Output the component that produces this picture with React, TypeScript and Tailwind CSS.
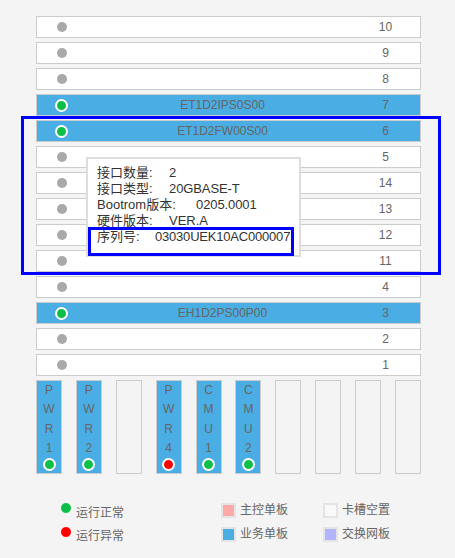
import React from "react";

const FONT = { fontFamily: '"Liberation Sans", Arial, "Noto Sans CJK SC", sans-serif' };

type Row = { num: number; name?: string; active?: boolean };

const rows: Row[] = [
  { num: 10 },
  { num: 9 },
  { num: 8 },
  { num: 7, name: "ET1D2IPS0S00", active: true },
  { num: 6, name: "ET1D2FW00S00", active: true },
  { num: 5 },
  { num: 14 },
  { num: 13 },
  { num: 12 },
  { num: 11 },
  { num: 4 },
  { num: 3, name: "EH1D2PS00P00", active: true },
  { num: 2 },
  { num: 1 },
];

type Slot = { label?: string; status?: "ok" | "bad" };
const slots: Slot[] = [
  { label: "PWR1", status: "ok" },
  { label: "PWR2", status: "ok" },
  {},
  { label: "PWR4", status: "bad" },
  { label: "CMU1", status: "ok" },
  { label: "CMU2", status: "ok" },
  {},
  {},
  {},
  {},
];

function RingDot({ color }: { color: "green" | "red" }) {
  return (
    <div
      className={
        "w-[13px] h-[13px] rounded-full border-2 border-white " +
        (color === "green" ? "bg-[#0cbf48]" : "bg-[#ff0000]")
      }
    />
  );
}

export default function App() {
  return (
    <div className="relative w-[455px] h-[558px] bg-[#f4f4f4] overflow-hidden" style={FONT}>
      <div className="pt-[16px] pl-[36px] w-[421px]">
        <div className="flex flex-col gap-[4px]">
          {rows.map((r) => (
            <div
              key={r.num}
              className={
                "h-[22px] border border-[#cccccc] grid grid-cols-[57px_1fr_69px] items-center text-[12px] text-[#666666] " +
                (r.active ? "bg-[#4aade3]" : "bg-white")
              }
            >
              <div className="flex items-center pl-[18px]">
                <div className="w-[13px] flex justify-center">
                  {r.active ? (
                    <RingDot color="green" />
                  ) : (
                    <div className="w-[10px] h-[10px] rounded-full bg-[#a9a9a9]" />
                  )}
                </div>
              </div>
              <div className="text-center leading-[20px]">{r.name ?? ""}</div>
              <div className="text-center leading-[20px]">{r.num}</div>
            </div>
          ))}
        </div>

        <div className="mt-[4px] h-[94px] flex justify-between">
          {slots.map((s, i) => (
            <div
              key={i}
              className={
                "w-[26px] h-full border border-[#cccccc] flex flex-col items-center pb-[2px] " +
                (s.label ? "bg-[#4aade3]" : "bg-[#f4f4f4]")
              }
            >
              {s.label && (
                <div className="flex flex-col items-center text-[12px] text-[#666666] leading-[19.3px]">
                  {s.label.split("").map((c, j) => (
                    <span key={j}>{c}</span>
                  ))}
                </div>
              )}
              {s.status && (
                <div className="mt-auto">
                  <RingDot color={s.status === "ok" ? "green" : "red"} />
                </div>
              )}
            </div>
          ))}
        </div>
      </div>

      {/* Legend */}
      <div className="mt-[28px] pl-[60px] flex text-[12px] text-[#666666]">
        <div className="w-[161px] flex flex-col gap-[8px]">
          <div className="h-[16px] flex items-start">
            <div className="w-[12px] h-[12px] rounded-full border border-white bg-[#0cbf48]" />
            <span className="ml-[4px] mt-[3px] leading-[16px]">运行正常</span>
          </div>
          <div className="h-[16px] flex items-start">
            <div className="w-[12px] h-[12px] rounded-full border border-white bg-[#ff0000]" />
            <span className="ml-[4px] mt-[2px] leading-[16px]">运行异常</span>
          </div>
        </div>
        <div className="w-[102px] flex flex-col gap-[8px]">
          <div className="h-[16px] flex items-center">
            <div className="w-[15px] h-[15px] border-2 border-[#e4e4e4] bg-[#ffaaaa]" />
            <span className="ml-[4px] leading-[16px]">主控单板</span>
          </div>
          <div className="h-[16px] flex items-center">
            <div className="w-[15px] h-[15px] border-2 border-[#e4e4e4] bg-[#4aade3]" />
            <span className="ml-[4px] leading-[16px]">业务单板</span>
          </div>
        </div>
        <div className="flex flex-col gap-[8px]">
          <div className="h-[16px] flex items-center">
            <div className="w-[15px] h-[15px] border-2 border-[#e4e4e4] bg-[#f9f9f9]" />
            <span className="ml-[4px] leading-[16px]">卡槽空置</span>
          </div>
          <div className="h-[16px] flex items-center">
            <div className="w-[15px] h-[15px] border-2 border-[#e4e4e4] bg-[#b3b3ff]" />
            <span className="ml-[4px] leading-[16px]">交换网板</span>
          </div>
        </div>
      </div>

      {/* Tooltip */}
      <div className="absolute left-[86px] top-[157px] w-[215px] h-[100px] bg-white border-2 border-[#dddddd] pl-[9px] pt-[6px] text-[13px] text-[#333333] leading-[16px]">
        <div className="flex">
          <span className="w-[72px]">接口数量:</span>
          <span>2</span>
        </div>
        <div className="flex">
          <span className="w-[72px]">接口类型:</span>
          <span className="tracking-[-0.1px]">20GBASE-T</span>
        </div>
        <div className="flex">
          <span className="w-[99px]">Bootrom版本:</span>
          <span className="tracking-[-0.1px]">0205.0001</span>
        </div>
        <div className="flex">
          <span className="w-[72px]">硬件版本:</span>
          <span>VER.A</span>
        </div>
        <div className="flex">
          <span className="w-[58px]">序列号:</span>
          <span className="tracking-[-0.2px]">03030UEK10AC000007</span>
        </div>
      </div>

      {/* Annotation boxes */}
      <div className="absolute left-[21px] top-[116px] w-[420px] h-[159px] border-[3px] border-[#0000ff] pointer-events-none" />
      <div className="absolute left-[88px] top-[227px] w-[206px] h-[29px] border-[3px] border-[#0000ff] pointer-events-none" />
    </div>
  );
}
